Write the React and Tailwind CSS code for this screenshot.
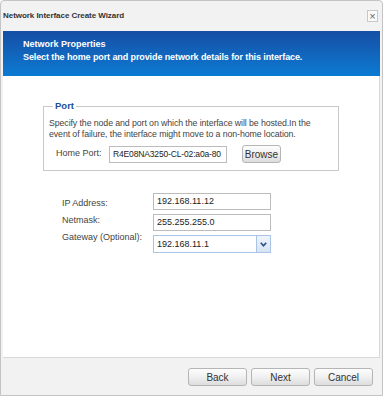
import React from "react";

const font = { fontFamily: '"Liberation Sans", Arial, sans-serif' };

const Btn = ({ text, className = "" }) => (
  <button
    className={`h-[18px] rounded-[3px] border border-[#b5b5b5] bg-gradient-to-b from-[#fdfdfd] via-[#f0f0f0] to-[#dcdcdc] text-[10px] text-[#333] ${className}`}
  >
    {text}
  </button>
);

export default function App() {
  return (
    <div className="w-[384px] h-[396px] bg-white" style={font}>
      <div className="w-[383px] h-[396px] border border-[#c4c4c4] rounded-t-[4px] bg-[#f2f2f2] flex flex-col">
        {/* title bar */}
        <div className="h-[30px] flex items-center justify-between pl-[2px] pr-[4px]">
          <p className="text-[8px] font-bold tracking-[-0.05px] text-[#333]">Network Interface Create Wizard</p>
          <div className="w-[11px] h-[12px] border border-[#c8c8c8] bg-[#fafafa] flex items-center justify-center text-[11px] leading-none text-[#666]">
            ×
          </div>
        </div>

        {/* header */}
        <div className="mx-[2px] h-[45px] bg-gradient-to-b from-[#154ea5] to-[#0a7bd3] pl-[20px] pt-[7px] text-[9px] font-bold leading-[13px] text-white">
          <p>Network Properties</p>
          <p className="tracking-[-0.1px]">Select the home port and provide network details for this interface.</p>
        </div>

        {/* content */}
        <div className="mx-[2px] h-[282px] bg-white border-r border-b border-[#d8d8d8]">
          <fieldset className="ml-[40px] mt-[24px] w-[296px] border border-[#c9c9c9] px-[5px] pb-[7px]">
            <legend className="ml-[4px] px-[2px] text-[9.5px] font-bold leading-[12px] text-[#1c4f9a]">Port</legend>
            <p className="pt-[6px] text-[8.8px] tracking-[-0.1px] leading-[11px] text-[#444] whitespace-nowrap">
              Specify the node and port on which the interface will be hosted.In the
              <br />
              event of failure, the interface might move to a non-home location.
            </p>
            <div className="mt-[5px] flex items-center">
              <span className="ml-[7px] w-[53px] text-[9px] text-[#444]">Home Port:</span>
              <div className="w-[118px] h-[17px] border border-[#bcbcbc] px-[3px] text-[8.5px] tracking-[-0.15px] leading-[15px] text-[#222] whitespace-nowrap">
                R4E08NA3250-CL-02:a0a-80
              </div>
              <Btn text="Browse" className="ml-[15px] w-[39px] h-[16px] text-[9px]" />
            </div>
          </fieldset>

          <div className="mt-[22px] ml-[59px] flex">
            <div className="w-[91px] pt-[2px] text-[9px] leading-[17px] text-[#444]">
              <p>IP Address:</p>
              <p>Netmask:</p>
              <p>Gateway (Optional):</p>
            </div>
            <div className="flex flex-col gap-[4px]">
              <div className="w-[118px] h-[17px] border border-[#bcbcbc] px-[3px] text-[9px] leading-[15px] text-[#222]">
                192.168.11.12
              </div>
              <div className="w-[118px] h-[17px] border border-[#bcbcbc] px-[3px] text-[9px] leading-[15px] text-[#222]">
                255.255.255.0
              </div>
              <div className="w-[118px] h-[18px] border border-[#a9c4e4] flex text-[9px] leading-[16px] text-[#222]">
                <span className="flex-1 px-[3px]">192.168.11.1</span>
                <div className="w-[14px] border-l border-[#a9c4e4] bg-gradient-to-b from-[#eef4fb] to-[#d6e4f4] flex items-center justify-center">
                  <svg width="7" height="5" viewBox="0 0 7 5">
                    <path d="M0.8 0.8 L3.5 3.8 L6.2 0.8" fill="none" stroke="#2a4e84" strokeWidth="1.6" />
                  </svg>
                </div>
              </div>
            </div>
          </div>
        </div>

        {/* footer */}
        <div className="flex justify-end gap-[4px] pr-[9px] pt-[10px]">
          <Btn text="Back" className="w-[59px]" />
          <Btn text="Next" className="w-[59px]" />
          <Btn text="Cancel" className="w-[59px]" />
        </div>
      </div>
    </div>
  );
}
